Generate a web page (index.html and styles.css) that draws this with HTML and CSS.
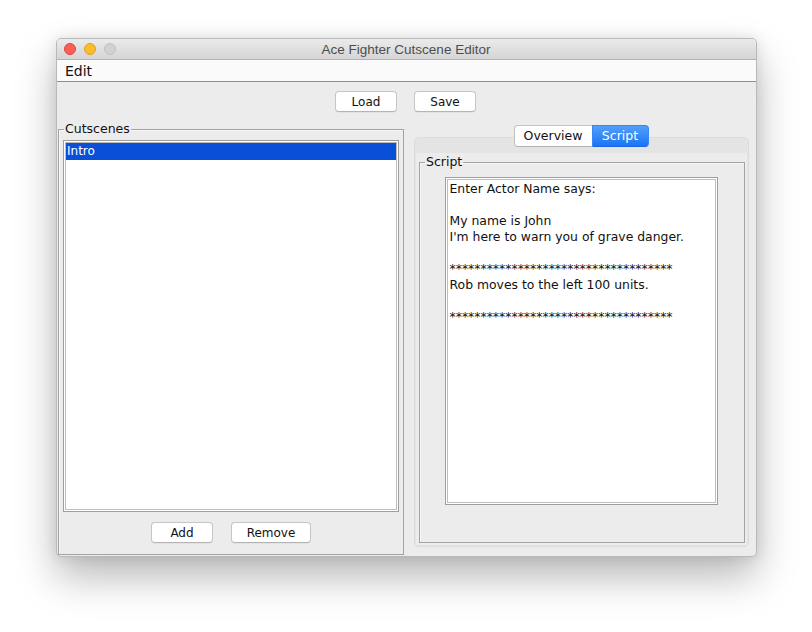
FILE: index.html
```html
<!DOCTYPE html>
<html>
<head>
<meta charset="utf-8">
<title>Ace Fighter Cutscene Editor</title>
<link rel="stylesheet" href="styles.css">
</head>
<body>
<div class="window">
  <div class="titlebar">
    <div class="lights">
      <span class="light red"></span>
      <span class="light yellow"></span>
      <span class="light gray"></span>
    </div>
    <div class="title">Ace Fighter Cutscene Editor</div>
    <div></div>
  </div>
  <div class="menubar"><span class="menu">Edit</span></div>
  <div class="content">
    <div class="toolbar">
      <button class="btn w62">Load</button>
      <button class="btn w62">Save</button>
    </div>
    <div class="main">
      <fieldset class="group left">
        <legend>Cutscenes</legend>
        <div class="list">
          <div class="list-inner">
            <div class="row selected">Intro</div>
          </div>
        </div>
        <div class="actions">
          <button class="btn w62">Add</button>
          <button class="btn w80">Remove</button>
        </div>
      </fieldset>
      <div class="right">
        <div class="tabs">
          <span class="tab first">Overview</span>
          <span class="tab active">Script</span>
        </div>
        <div class="tabpane">
          <div class="tabinner">
            <fieldset class="group script">
              <legend>Script</legend>
              <div class="textarea">
                <div class="textarea-inner">Enter Actor Name says:

My name is John
I'm here to warn you of grave danger.

************************************
Rob moves to the left 100 units.

************************************</div>
              </div>
            </fieldset>
          </div>
        </div>
      </div>
    </div>
  </div>
</div>
</body>
</html>
```

FILE: styles.css
```css
* { box-sizing: border-box; }
html {
  margin: 0;
  padding: 0;
  background: #ffffff;
  min-height: 632px;
}
body {
  margin: 0;
  min-height: 632px;
  font-family: "DejaVu Sans", "Liberation Sans", sans-serif;
  font-size: 12px;
  color: #000;
  padding: 38px 0 0 56px;
  background: #ffffff;
}
.window {
  width: 701px;
  height: 519px;
  border: 1px solid #b9b9b9;
  border-radius: 5px;
  background: #ececec;
  box-shadow: 0 20px 40px rgba(0,0,0,0.28), 0 0 14px rgba(0,0,0,0.10);
  overflow: hidden;
  display: flex;
  flex-direction: column;
}
.titlebar {
  height: 21px;
  flex: none;
  display: grid;
  grid-template-columns: 1fr auto 1fr;
  align-items: center;
  background: linear-gradient(#ebebeb, #d5d5d5);
  border-bottom: 1px solid #b3b3b3;
}
.lights {
  display: flex;
  gap: 8px;
  padding-left: 7px;
}
.light {
  width: 12px;
  height: 12px;
  border-radius: 50%;
  display: block;
}
.red { background: #fc5f57; border: 0.5px solid #e0443e; }
.yellow { background: #fdbc2e; border: 0.5px solid #dea123; }
.gray { background: #d1d1d1; border: 0.5px solid #c1c1c1; }
.title {
  font-family: "Liberation Sans", "DejaVu Sans", sans-serif;
  font-size: 13.5px;
  color: #4d4d4d;
  margin-left: -1px;
}
.menubar {
  height: 22px;
  flex: none;
  background: #fafafa;
  border-bottom: 1px solid #8e8e8e;
  padding-left: 8px;
  display: flex;
  align-items: center;
}
.menu {
  font-size: 14px;
  color: #111;
}
.content {
  flex: 1;
  display: flex;
  flex-direction: column;
}
.toolbar {
  display: flex;
  justify-content: center;
  gap: 17px;
  margin-top: 9px;
  padding-right: 2px;
}
.btn {
  height: 21px;
  padding: 0;
  background: #ffffff;
  border: 1px solid #c6c6c6;
  border-bottom-color: #b4b4b4;
  border-radius: 4px;
  font-family: "DejaVu Sans", sans-serif;
  font-size: 12px;
  color: #111;
  box-shadow: 0 0.5px 0.5px rgba(0,0,0,0.08);
}
.w62 { width: 62px; }
.w80 { width: 80px; }
.main {
  display: flex;
  margin-top: 9px;
  padding-left: 1px;
  gap: 10px;
  align-items: flex-start;
}
.group {
  margin: 0;
  border: 1px solid #a3a3a3;
  box-shadow: inset 1px 1px 0 #f7f7f7;
  min-width: 0;
}
.group legend {
  font-size: 12.5px;
  line-height: 16px;
  padding: 0 1px;
  color: #111;
}
.left {
  width: 346px;
  height: 434px;
  padding: 3px 4px 11px 4px;
  display: flex;
  flex-direction: column;
}
.left legend { margin-left: 1px; }
.list {
  height: 372px;
  border: 1px solid #9e9e9e;
  background: #fff;
  padding: 1px;
}
.list-inner {
  height: 100%;
  border: 1px solid #bdbdbd;
}
.row {
  height: 17px;
  line-height: 17px;
  padding-left: 1px;
}
.selected {
  background: #0a4fd7;
  color: #fff;
}
.actions {
  margin-top: 10px;
  display: flex;
  justify-content: center;
  gap: 18px;
}
.right {
  width: 335px;
  margin-top: 4px;
  display: flex;
  flex-direction: column;
}
.tabs {
  position: relative;
  z-index: 1;
  display: flex;
  justify-content: center;
  height: 22px;
  margin-bottom: -10px;
  padding-right: 1px;
}
.tab {
  height: 22px;
  line-height: 20px;
  text-align: center;
  font-size: 12.5px;
  border: 1px solid #c3c3c3;
  border-bottom-color: #b1b1b1;
}
.first {
  width: 78px;
  background: #fff;
  color: #111;
  border-radius: 4px 0 0 4px;
  border-right: none;
}
.active {
  width: 57px;
  background: linear-gradient(#52a0fb, #1b74f6);
  border-color: #3a86f3;
  border-bottom-color: #1a68e6;
  color: #fff;
  border-radius: 0 4px 4px 0;
}
.tabpane {
  height: 410px;
  border: 1px solid #dcdcdc;
  border-radius: 5px;
  background: #e4e4e4;
  padding: 15px 1px 1px 1px;
}
.tabinner {
  height: 100%;
  background: #ececec;
  padding: 1px 2px 1px 3px;
}
.script {
  height: 389px;
  padding: 7px 0 0 0;
  display: flex;
  flex-direction: column;
  align-items: center;
}
.script legend { margin-left: 5px; }
.textarea {
  width: 273px;
  height: 328px;
  border: 1px solid #9e9e9e;
  background: #fff;
  padding: 1px;
  margin-left: -2px;
}
.textarea-inner {
  height: 100%;
  border: 1px solid #bdbdbd;
  white-space: pre;
  line-height: 16px;
  padding: 1px 2px 0 2px;
  font-size: 12.4px;
  color: #111;
}
```
